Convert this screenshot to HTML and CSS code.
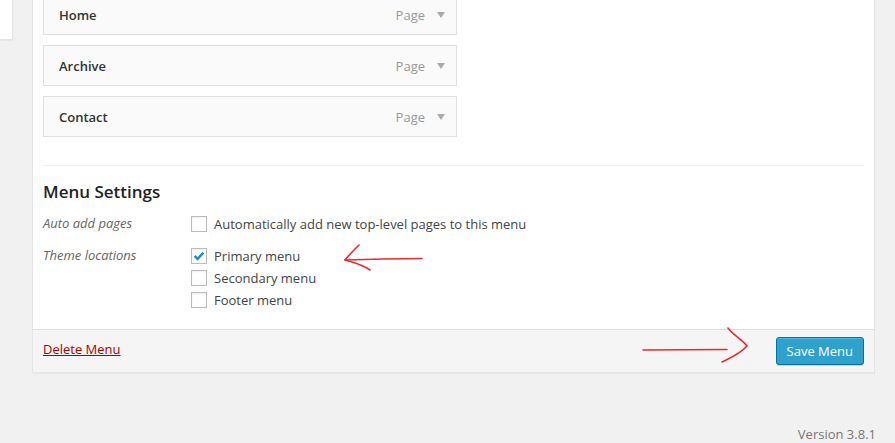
FILE: index.html
```html
<!DOCTYPE html>
<html>
<head>
<meta charset="utf-8">
<link rel="stylesheet" href="styles.css">
</head>
<body>
<div class="layout">
  <div class="sidebar"><div class="side-box"></div></div>
  <div class="main">
    <div class="panel">
      <div class="panel-body">
        <ul class="menu-items">
          <li class="menu-item"><span class="item-title">Home</span><span class="item-meta"><span class="item-type">Page</span><span class="item-arrow"></span></span></li>
          <li class="menu-item"><span class="item-title">Archive</span><span class="item-meta"><span class="item-type">Page</span><span class="item-arrow"></span></span></li>
          <li class="menu-item"><span class="item-title">Contact</span><span class="item-meta"><span class="item-type">Page</span><span class="item-arrow"></span></span></li>
        </ul>
        <div class="settings">
          <h3 class="settings-title">Menu Settings</h3>
          <div class="setting-row">
            <div class="setting-label">Auto add pages</div>
            <div class="setting-options">
              <label class="option"><span class="checkbox"></span>Automatically add new top-level pages to this menu</label>
            </div>
          </div>
          <div class="setting-row">
            <div class="setting-label">Theme locations</div>
            <div class="setting-options">
              <label class="option"><span class="checkbox checked"><svg viewBox="0 0 16 16" width="16" height="16"><path d="M3.6 7.9 L6.6 10.9 L12.4 4.6" fill="none" stroke="#1e8cbe" stroke-width="2.4"/></svg></span>Primary menu</label>
              <label class="option"><span class="checkbox"></span>Secondary menu</label>
              <label class="option"><span class="checkbox"></span>Footer menu</label>
            </div>
          </div>
        </div>
      </div>
      <div class="panel-footer">
        <a class="delete-link" href="#">Delete Menu</a>
        <button class="save-btn">Save Menu</button>
      </div>
    </div>
    <div class="version-row"><span class="version">Version 3.8.1</span></div>
  </div>
</div>
<svg class="annotations" width="895" height="443" viewBox="0 0 895 443">
  <g fill="none" stroke="#ea2a2e" stroke-width="1.6" stroke-linecap="round" stroke-linejoin="round">
    <path d="M422 258.5 C400 258.5 370 259 345 260"/>
    <path d="M359 245 C354 250 349 255 345 260 C352 262 362 264 370 270"/>
    <path d="M643 350 C670 350 700 349.5 727 349.5"/>
    <path d="M728 328 C733 335 743 340 747 346 C740 354 730 358 722 362"/>
  </g>
</svg>
</body>
</html>
```

FILE: styles.css
```css
html, body {
  margin: 0;
  padding: 0;
}
body {
  background: #f1f1f1;
  font-family: "Open Sans", "Noto Sans", sans-serif;
  font-size: 13px;
  color: #444;
  width: 895px;
  height: 443px;
  overflow: hidden;
  position: relative;
}
.layout {
  display: flex;
  align-items: flex-start;
}
.sidebar {
  width: 32px;
  flex: none;
}
.side-box {
  width: 12px;
  height: 39px;
  background: #fff;
  border-right: 1px solid #e5e5e5;
  border-bottom: 1px solid #e5e5e5;
  box-shadow: 0 1px 1px rgba(0,0,0,0.04);
}
.main {
  width: 843px;
  flex: none;
}
.panel {
  background: #fff;
  border: 1px solid #e5e5e5;
  border-top: none;
  box-shadow: 0 1px 1px rgba(0,0,0,0.04);
}
.panel-body {
  padding: 0 10px 18px;
}
.menu-items {
  list-style: none;
  margin: -6px 0 0;
  padding: 0 0 28px;
  display: flex;
  flex-direction: column;
  gap: 10px;
  border-bottom: 1px solid #eee;
}
.menu-item {
  width: 414px;
  height: 41px;
  box-sizing: border-box;
  border: 1px solid #dfdfdf;
  background: #fafafa;
  display: flex;
  align-items: center;
  justify-content: space-between;
  padding: 0 11px 0 15px;
}
.item-title {
  font-weight: 600;
  color: #333;
  font-size: 13px;
}
.item-meta {
  display: flex;
  align-items: center;
  gap: 12px;
}
.item-type {
  color: #999;
  font-size: 13px;
}
.item-arrow {
  width: 0;
  height: 0;
  border-left: 4px solid transparent;
  border-right: 4px solid transparent;
  border-top: 6px solid #aaa;
  margin-top: 1px;
}
.settings-title {
  margin: 14px 0 10px;
  font-size: 17px;
  font-weight: 600;
  color: #222;
  line-height: 23px;
}
.setting-row {
  display: flex;
  margin-bottom: 10px;
}
.setting-row:last-child {
  margin-bottom: 0;
}
.setting-label {
  width: 148px;
  flex: none;
  font-style: italic;
  color: #666;
  line-height: 20px;
}
.setting-options {
  display: flex;
  flex-direction: column;
}
.option {
  display: flex;
  align-items: center;
  height: 22px;
  color: #444;
}
.checkbox {
  width: 16px;
  height: 16px;
  box-sizing: border-box;
  border: 1px solid #bbb;
  background: #fff;
  box-shadow: inset 0 1px 2px rgba(0,0,0,0.07);
  margin-right: 7px;
  flex: none;
  position: relative;
}
.checkbox svg {
  position: absolute;
  left: -1px;
  top: -1px;
}
.panel-footer {
  background: #f5f5f5;
  border-top: 1px solid #dfdfdf;
  padding: 7px 10px 7px;
  display: flex;
  align-items: center;
  justify-content: space-between;
}
.delete-link {
  color: #a00;
  text-decoration: underline;
  font-size: 13px;
  margin-bottom: 4px;
}
.save-btn {
  height: 28px;
  box-sizing: border-box;
  padding: 0 10px 1px;
  font-family: "Open Sans", "Noto Sans", sans-serif;
  font-size: 13px;
  color: #fff;
  background: #2ea2cc;
  border: 1px solid #0074a2;
  border-radius: 3px;
  box-shadow: inset 0 1px 0 rgba(120,200,230,0.5), 0 1px 0 rgba(0,0,0,0.15);
}
.version-row {
  display: flex;
  justify-content: flex-end;
  margin-top: 53px;
  line-height: 16px;
}
.version {
  color: #777;
  font-size: 13px;
  margin-right: -1px;
}
.annotations {
  position: absolute;
  left: 0;
  top: 0;
  pointer-events: none;
}
```
